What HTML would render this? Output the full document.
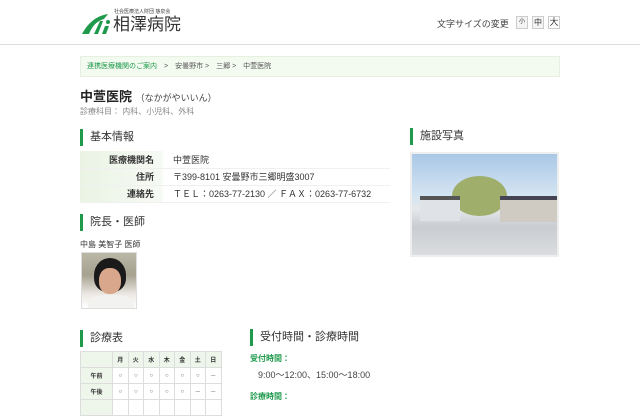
<!DOCTYPE html>
<html><head><meta charset="utf-8"><style>
*{margin:0;padding:0;box-sizing:border-box}
body{width:640px;height:400px;overflow:hidden;background:#fff;font-family:"Liberation Sans","Noto Sans CJK JP",sans-serif;color:#333;position:relative}
.a{position:absolute;white-space:nowrap}
.hd{position:absolute;left:0;top:0;width:640px;height:45px;border-bottom:1px solid #ddd;background:#fff}
.h2{position:absolute;font-size:11px;color:#333;padding-left:7px;border-left:3px solid #1f9a4c;height:17px;line-height:17px}
table{border-collapse:collapse}
.bt td{height:17px;font-size:9px;border-bottom:1px solid #f0f0f0}
.bt td.th{background:linear-gradient(90deg,#eaf3e4,#f7faf5);font-weight:bold;text-align:right;padding-right:9px;width:83px}
.bt td.v{padding-left:10px;background:#fff}
.st td{border:1px solid #ddd;font-size:6px;text-align:center;width:15.5px;height:16px;color:#666}
.st td.g{background:#eef5ea;font-weight:bold;color:#333}
.btn{position:absolute;top:16px;width:12px;height:13px;border:1px solid #ccc;background:#f4f4f4;font-size:8px;text-align:center;line-height:11px}
</style></head><body>
<div class="hd">
<svg class="a" style="left:82px;top:13px" width="30" height="22" viewBox="0 0 30 22"><path d="M0 21 C6 10 14 3 26 1 L22 6 C15 8 10 13 7 21Z" fill="#1f9a4c"/><path d="M12 21 L18 8 L21 8 L16 21Z" fill="#1f9a4c"/><circle cx="26" cy="9" r="2" fill="#1f9a4c"/><path d="M23 13 L27 13 L24 21 L20 21Z" fill="#1f9a4c"/></svg>
<div class="a" style="left:114px;top:8px;font-size:5px;color:#444">社会医療法人財団 慈泉会</div>
<div class="a" style="left:113px;top:15px;font-size:17px;line-height:20px;color:#333">相澤病院</div>
<div class="a" style="left:437px;top:17px;font-size:9px;color:#444">文字サイズの変更</div>
<div class="btn" style="left:516px;font-size:6px">小</div>
<div class="btn" style="left:532px">中</div>
<div class="btn" style="left:548px;font-size:9px;background:#fff">大</div>
</div>
<div class="a" style="left:80px;top:56px;width:480px;height:21px;background:#f3faef;border:1px solid #e6f0e0;font-size:7px;line-height:19px;padding-left:6px;color:#555"><span style="color:#1f9a4c">連携医療機関のご案内</span>　&gt;　安曇野市 &gt;　三郷 &gt;　中萱医院</div>
<div class="a" style="left:80px;top:86px;font-size:13px;font-weight:bold;color:#222">中萱医院 <span style="font-size:9px;font-weight:normal;color:#444">（なかがやいいん）</span></div>
<div class="a" style="left:80px;top:106px;font-size:8px;color:#888">診療科目：  内科、小児科、外科</div>
<div class="h2" style="left:80px;top:129px">基本情報</div>
<table class="bt a" style="left:80px;top:151px;width:310px">
<tr><td class="th">医療機関名</td><td class="v">中萱医院</td></tr>
<tr><td class="th">住所</td><td class="v">〒399-8101 安曇野市三郷明盛3007</td></tr>
<tr><td class="th">連絡先</td><td class="v">ＴＥＬ：0263-77-2130 ／ ＦＡＸ：0263-77-6732</td></tr>
</table>
<div class="h2" style="left:80px;top:214px">院長・医師</div>
<div class="a" style="left:80px;top:239px;font-size:8px">中島 美智子 医師</div>
<div class="a" style="left:81px;top:252px;width:56px;height:57px;background:linear-gradient(#bcb8a8 0,#a6a28f 40%,#ece8e4 75%,#fff);overflow:hidden;border:1px solid #ddd">
<div style="position:absolute;left:12px;top:5px;width:32px;height:34px;border-radius:50% 50% 40% 40%;background:#1a1a1a"></div>
<div style="position:absolute;left:17px;top:15px;width:22px;height:26px;border-radius:45%;background:#d9a88c"></div>
<div style="position:absolute;left:6px;top:42px;width:46px;height:20px;border-radius:40% 40% 0 0;background:#f2f2f0"></div></div>
<div class="h2" style="left:410px;top:128px">施設写真</div>
<div class="a" style="left:410px;top:152px;width:149px;height:105px;border:2px solid #eee;overflow:hidden;background:linear-gradient(#a9c8e6 0,#d3e4f2 40%,#e5e8ea 55%,#c9cdd2 72%,#dadcde 100%)">
<div style="position:absolute;left:40px;top:22px;width:55px;height:40px;border-radius:50%;background:#9fae6a"></div>
<div style="position:absolute;left:8px;top:42px;width:40px;height:25px;background:#dfe2e6;border-top:4px solid #555"></div>
<div style="position:absolute;left:88px;top:42px;width:60px;height:26px;background:#cfcac2;border-top:4px solid #445"></div>
</div>
<div class="h2" style="left:80px;top:330px">診療表</div>
<table class="st a" style="left:80px;top:351px">
<tr><td class="g" style="width:32px"></td><td class="g">月</td><td class="g">火</td><td class="g">水</td><td class="g">木</td><td class="g">金</td><td class="g">土</td><td class="g">日</td></tr>
<tr><td class="g">午前</td><td>○</td><td>○</td><td>○</td><td>○</td><td>○</td><td>○</td><td>－</td></tr>
<tr><td class="g">午後</td><td>○</td><td>○</td><td>○</td><td>○</td><td>○</td><td>－</td><td>－</td></tr>
<tr><td class="g"></td><td></td><td></td><td></td><td></td><td></td><td></td><td></td></tr>
</table>
<div class="h2" style="left:250px;top:329px">受付時間・診療時間</div>
<div class="a" style="left:250px;top:353px;font-size:8px;font-weight:bold;color:#1f9a4c">受付時間：</div>
<div class="a" style="left:258px;top:368px;font-size:9px;color:#444">9:00～12:00、15:00～18:00</div>
<div class="a" style="left:250px;top:391px;font-size:8px;font-weight:bold;color:#1f9a4c">診療時間：</div>
</body></html>
